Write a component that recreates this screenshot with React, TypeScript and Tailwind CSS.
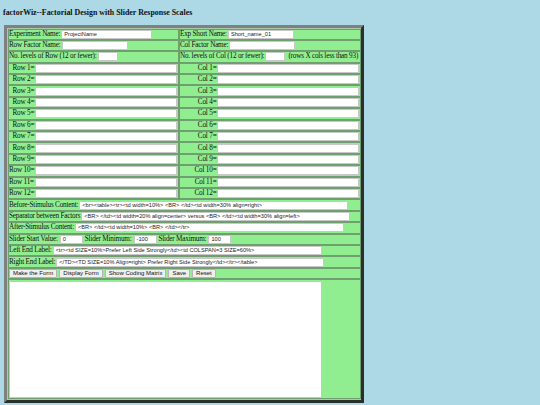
const topRows = [1, 2, 3, 4, 5, 6, 7, 8, 9, 10, 11, 12];

const cell = "border border-[#6f9f6f] bg-[#90ee90] flex items-center overflow-hidden whitespace-nowrap";

function Field({ w, value = "" }: { w: string; value?: string }) {
  return (
    <div
      className={`${w} h-[9px] shrink-0 bg-white border border-[#c8c8c8] rounded-[1px] px-[2px] text-[5.65px] leading-[7px] tracking-normal text-[#222] font-['Liberation_Sans',sans-serif] overflow-hidden whitespace-nowrap`}
    >
      {value}
    </div>
  );
}

function Btn({ label }: { label: string }) {
  return (
    <div className="h-[9.5px] px-[3px] flex items-center bg-[#efefef] border border-[#b5b5b5] rounded-[1px] text-[6px] tracking-normal text-[#111] font-['Liberation_Sans',sans-serif]">
      {label}
    </div>
  );
}

function Wide({ label, w, value }: { label: string; w: string; value?: string }) {
  return (
    <div className={`${cell} h-[11.4px] pl-[0.5px] gap-[1px]`}>
      <span>{label}</span>
      <Field w={w} value={value} />
    </div>
  );
}

export default function App() {
  return (
    <div className="w-[540px] h-[405px] overflow-hidden bg-[#add8e6] font-['Liberation_Serif',serif] text-[7.2px] tracking-[-0.2px] leading-[9px] text-[#111]">
      <h1 className="pl-[3px] pt-[8px] h-[25px] text-[7.9px] tracking-normal leading-[9px] font-bold">
        factorWiz--Factorial Design with Slider Response Scales
      </h1>
      <div className="ml-[4px] w-[360px] h-[378px] border-[3px] border-t-[#808080] border-l-[#808080] border-r-[#2a2f2a] border-b-[#2a2f2a] bg-[#a9c9a9] p-[0.5px]">
        <div className="flex">
          <div className="w-[171px] shrink-0 flex flex-col">
            <Wide label="Experiment Name:" w="w-[91px]" value="ProjectName" />
            <Wide label="Row Factor Name:" w="w-[66px]" />
            <Wide label="No. levels of Row (12 or fewer):" w="w-[20px]" />
            {topRows.map((n) => (
              <div key={n} className={`${cell} h-[11.4px] pr-[1px] ${n < 10 ? "pl-[4px]" : "pl-[0.5px]"}`}>
                <span className="flex-1">Row {n}=</span>
                <Field w="w-[142px]" />
              </div>
            ))}
          </div>
          <div className="flex-1 min-w-0 flex flex-col">
            <Wide label="Exp Short Name:" w="w-[66px]" value="Short_name_01" />
            <Wide label="Col Factor Name:" w="w-[66px]" />
            <div className={`${cell} h-[11.4px] pl-[0.5px] gap-[1px]`}>
              <span>No. levels of Col (12 or fewer):</span>
              <Field w="w-[20px]" />
              <span className="ml-[2px]">(rows X cols less than 93)</span>
            </div>
            {topRows.map((n) => (
              <div key={n} className={`${cell} h-[11.4px] justify-end pr-[1px]`}>
                <span>Col {n}=</span>
                <Field w="w-[142px]" />
              </div>
            ))}
          </div>
        </div>
        <Wide
          label="Before-Stimulus Content:"
          w="w-[269px]"
          value="<br><table><tr><td width=10%> <BR> </td><td width=30% align=right>"
        />
        <Wide
          label="Separator between Factors"
          w="w-[269px]"
          value=" <BR> </td><td width=20% align=center> versus <BR> </td><td width=30% align=left>"
        />
        <Wide label="After-Stimulus Content:" w="w-[269px]" value="<BR> </td><td width=10%> <BR> </td></tr>" />
        <div className={`${cell} h-[11.4px] pl-[0.5px] gap-[2px]`}>
          <span>Slider Start Value:</span>
          <Field w="w-[23px]" value="0" />
          <span>Slider Minimum:</span>
          <Field w="w-[23px]" value="-100" />
          <span>Slider Maximum:</span>
          <Field w="w-[23px]" value="100" />
        </div>
        <Wide
          label="Left End Label:"
          w="w-[269px]"
          value="<tr><td SIZE=10%>Prefer Left Side Strongly</td><td COLSPAN=3 SIZE=60%>"
        />
        <Wide
          label="Right End Label:"
          w="w-[268px]"
          value="</TD><TD SIZE=10% Align=right> Prefer Right Side Strongly</td></tr></table>"
        />
        <div className={`${cell} h-[11.4px] pl-[0.5px] gap-[2px]`}>
          <Btn label="Make the Form" />
          <Btn label="Display Form" />
          <Btn label="Show Coding Matrix" />
          <Btn label="Save" />
          <Btn label="Reset" />
        </div>
        <div className={`${cell} h-[120px] items-start pl-[0.5px] pt-[1px]`}>
          <div className="w-[313px] h-[117px] bg-white border border-[#c8c8c8]" />
        </div>
      </div>
    </div>
  );
}
